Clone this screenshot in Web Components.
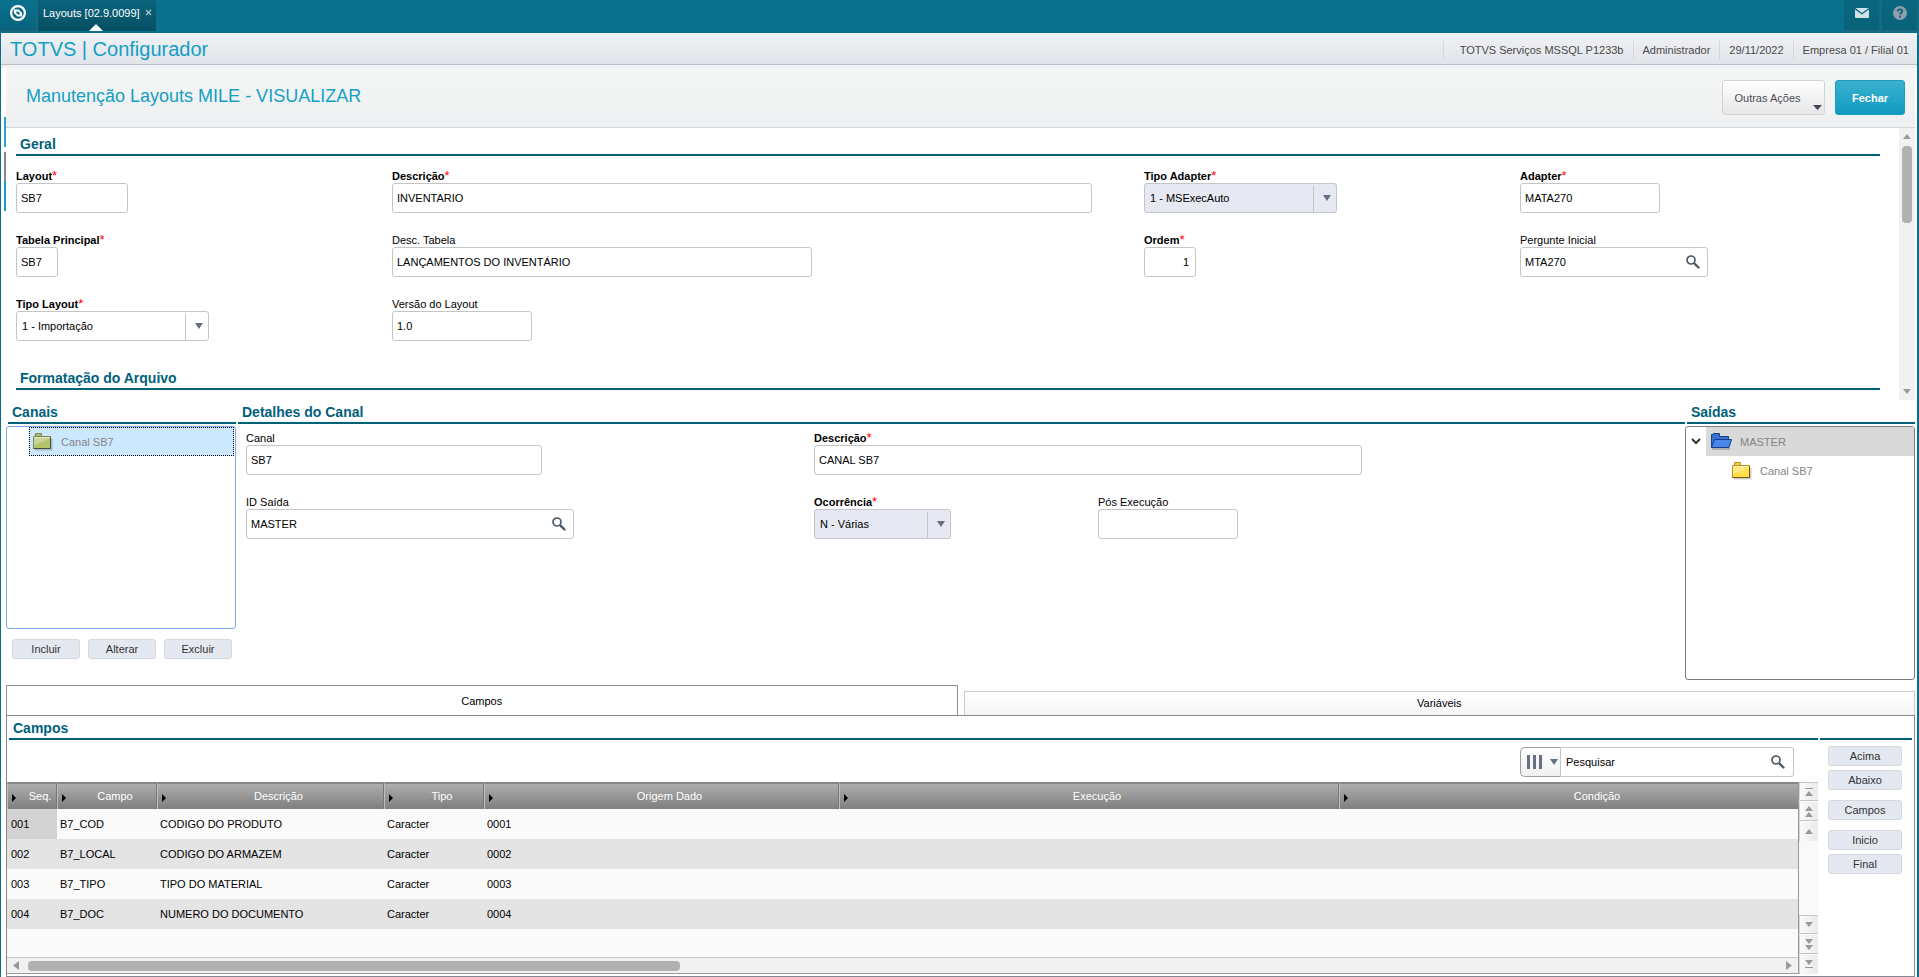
<!DOCTYPE html>
<html lang="pt-BR">
<head>
<meta charset="utf-8">
<meta name="viewport" content="width=device-width, initial-scale=1">
<title>TOTVS | Configurador</title>
<style>
  html, body { margin: 0; height: 100%; }
  body { font: 11px/14px "Liberation Sans", Arial, sans-serif; color: #000; background: #fff; }
  .grid { display: grid; grid-template-columns: repeat(5, minmax(0, 1fr)); row-gap: 20px; }
  .c1 { grid-column: 1; } .c2 { grid-column: 2; } .c3 { grid-column: 3; } .c4 { grid-column: 4; } .c5 { grid-column: 5; }
  .c12 { grid-column: 1 / span 2; } .c23 { grid-column: 2 / span 2; } .c34 { grid-column: 3 / span 2; }
</style>
</head>
<body>
<mile-app>
  <top-bar slot="top" tab="Layouts [02.9.0099]"></top-bar>
  <info-bar slot="info" heading="TOTVS | Configurador">
    <span>TOTVS Serviços MSSQL P1233b</span><span>Administrador</span><span>29/11/2022</span><span>Empresa 01 / Filial 01</span>
  </info-bar>
  <page-title slot="title">Manutenção Layouts MILE - VISUALIZAR</page-title>

  <scroll-form slot="form">
    <section-title>Geral</section-title>
    <div class="grid" slot="fields">
      <form-field class="c1" label="Layout" required value="SB7" style="--w:112px"></form-field>
      <form-field class="c23" label="Descrição" required value="INVENTARIO" style="--w:700px"></form-field>
      <form-field class="c4" label="Tipo Adapter" required kind="select" locked value="1 - MSExecAuto" style="--w:193px"></form-field>
      <form-field class="c5" label="Adapter" required value="MATA270" style="--w:140px"></form-field>
      <form-field class="c1" label="Tabela Principal" required value="SB7" style="--w:42px"></form-field>
      <form-field class="c23" label="Desc. Tabela" value="LANÇAMENTOS DO INVENTÁRIO" style="--w:420px"></form-field>
      <form-field class="c4" label="Ordem" required value="1" numeric style="--w:52px"></form-field>
      <form-field class="c5" label="Pergunte Inicial" kind="lookup" value="MTA270" style="--w:188px"></form-field>
      <form-field class="c1" label="Tipo Layout" required kind="select" value="1 - Importação" style="--w:193px"></form-field>
      <form-field class="c2" label="Versão do Layout" value="1.0" style="--w:140px"></form-field>
    </div>
    <section-title slot="next">Formatação do Arquivo</section-title>
  </scroll-form>

  <tree-panel slot="left" heading="Canais" active>
    <tree-item folder="green" selected>Canal SB7</tree-item>
    <ui-button slot="actions">Incluir</ui-button>
    <ui-button slot="actions">Alterar</ui-button>
    <ui-button slot="actions">Excluir</ui-button>
  </tree-panel>

  <detail-panel slot="center" heading="Detalhes do Canal">
    <div class="grid">
      <form-field class="c12" label="Canal" value="SB7" style="--w:296px"></form-field>
      <form-field class="c34" label="Descrição" required value="CANAL SB7" style="--w:548px"></form-field>
      <form-field class="c12" label="ID Saída" kind="lookup" value="MASTER" style="--w:328px"></form-field>
      <form-field class="c3" label="Ocorrência" required kind="select" locked value="N - Várias" style="--w:137px"></form-field>
      <form-field class="c4" label="Pós Execução" value="" style="--w:140px"></form-field>
    </div>
  </detail-panel>

  <tree-panel slot="right" heading="Saídas">
    <tree-item folder="blue" open>MASTER</tree-item>
    <tree-item folder="yellow" child>Canal SB7</tree-item>
  </tree-panel>

  <tab-set slot="tabs" first="Campos" second="Variáveis"></tab-set>
  <fields-pane slot="pane"></fields-pane>
</mile-app>

<script>
const BASE = `
  :host { display: block; box-sizing: border-box; }
  *, *::before, *::after { box-sizing: border-box; }
  button, input, select { font: inherit; color: inherit; margin: 0; }
`;
const define = (name, render) => customElements.define(name, class extends HTMLElement {
  constructor() { super(); this.attachShadow({ mode: 'open' }); }
  connectedCallback() {
    const { css, html } = render(this);
    this.shadowRoot.innerHTML = `<style>${BASE}${css}</style>${html}`;
  }
});
const tri = (dir, w = 8, h = 5, fill = '#9a9a9a') => {
  const d = { up: `M0 ${h}L${w / 2} 0L${w} ${h}z`, down: `M0 0H${w}L${w / 2} ${h}z`,
    left: `M${w} 0V${h}L0 ${h / 2}z`, right: `M0 0V${h}L${w} ${h / 2}z` }[dir];
  return `<svg width="${w}" height="${h}" viewBox="0 0 ${w} ${h}" aria-hidden="true"><path d="${d}" fill="${fill}"/></svg>`;
};
const lens = `<svg width="14" height="14" viewBox="0 0 14 14" aria-hidden="true" fill="none" stroke="#4f5a69"><circle cx="5" cy="5" r="4" stroke-width="1.7"/><path d="M8 8l1.600 1.600" stroke-width="1.800"/><path d="M9.300 9.300l3.200 3.200" stroke-width="2.400" stroke-linecap="round"/></svg>`;

define('mile-app', () => ({
  css: `
    :host { display: flex; flex-direction: column; min-height: 100vh; }
    .frame { flex: 1; display: flex; flex-direction: column; border-left: 1px solid #08708c; border-right: 2px solid #08708c; background: #fff; }
    .work { position: relative; flex: 1; display: flex; flex-direction: column; padding: 0 2px 0 5px; }
    .edge { position: absolute; left: 3px; top: 49px; width: 2px; height: 94px;
      background: linear-gradient(#2da3c4 0 30px, #fff 30px 35px, #8b8689 35px 64px, #18a0c4 64px); }
    .mid { display: grid; grid-template-columns: 230px minmax(0, 1fr) 230px; margin-top: 4px; min-height: 276px; }
    ::slotted([slot=pane]) { flex: 1; }
  `,
  html: `<slot name="top"></slot><div class="frame"><slot name="info"></slot>
    <main class="work"><div class="edge"></div><slot name="title"></slot><slot name="form"></slot>
    <div class="mid"><slot name="left"></slot><slot name="center"></slot><slot name="right"></slot></div>
    <slot name="tabs"></slot><slot name="pane"></slot></main></div>`
}));

define('top-bar', el => ({
  css: `
    :host { display: flex; height: 33px; background: #0a718d; align-items: flex-start; color: #fff; }
    button { height: 31px; width: 36px; border: 0; padding: 0 0 5px; background: linear-gradient(#0a718d, #08647d); display: flex; align-items: center; justify-content: center; }
    .home { border-right: 1px solid #2c5f6f; width: 37px; padding-right: 1px; border-bottom: 1px solid #2c5f6f; }
    .tab { position: relative; display: flex; align-items: center; gap: 5px; height: 31px; margin-left: 1px; padding: 0 4px 5px 5px; background: linear-gradient(#09657e, #064f62); }
    .tab a { color: #fff; text-decoration: none; }
    .tab button { width: 7px; height: 20px; padding: 0 0 2px; background: none; }
    .notch { position: absolute; left: 51px; bottom: 0; display: flex; }
    .right { margin-left: auto; display: flex; gap: 2px; padding-right: 1px; }
    .right button { border-bottom: 1px solid #2c5f6f; border-right: 1px solid #2c5f6f; background: linear-gradient(#09677f, #08627a); }
  `,
  html: `<button class="home" aria-label="Início"><svg width="16" height="16" viewBox="0 0 16 16"><circle cx="8" cy="8" r="6.900" fill="none" stroke="#fff" stroke-width="2.200"/><path d="M3.800 4.600H8.600L12.200 8V11.400H7.400L3.800 8z" fill="#fff"/><path d="M6.300 6.500H8.200L9.900 8.200V9.600H8L6.300 8z" fill="#0a6c87"/></svg></button>
    <div class="tab"><a href="#">${el.getAttribute('tab')}</a><button aria-label="Fechar aba"><svg width="7" height="7" viewBox="0 0 7 7"><path d="M1 1l5 5M6 1L1 6" stroke="#a9c6cf" stroke-width="1.200"/></svg></button><span class="notch">${tri('up', 14, 7, '#fff')}</span></div>
    <div class="right"><button aria-label="Mensagens"><svg width="14" height="10" viewBox="0 0 14 10"><rect width="14" height="10" rx="1" fill="#d3e0e5"/><path d="M0 .6L7 5.800L14 .6" fill="none" stroke="#0a6a83" stroke-width="1.300"/></svg></button>
    <button aria-label="Ajuda"><svg width="14" height="14" viewBox="0 0 14 14"><circle cx="7" cy="7" r="7" fill="#8c9dab"/><path d="M4.800 5.400C4.800 2.600 9.300 2.700 9.300 5.200C9.300 6.800 7 6.700 7 8.500M7 9.700v1.700" fill="none" stroke="#0a6179" stroke-width="1.700"/></svg></button></div>`
}));

define('info-bar', el => ({
  css: `
    :host { display: flex; align-items: center; height: 35px; padding: 0 8px 1px 9px; border-bottom: 3px solid #f0eff2;
      background: linear-gradient(#f0f1f3, #e0e4e9); box-shadow: inset 0 -1px #b8c3ca; }
    h1 { margin: 0; font-size: 20px; line-height: 24px; font-weight: 400; color: #149fc4; }
    nav { margin-left: auto; display: flex; color: #4a4a4a; padding-top: 2px; }
    ::slotted(span) { border-left: 1px solid #d3d6d9; line-height: 18px; padding: 0 9px; }
    ::slotted(span:first-child) { padding-left: 16px; }
    ::slotted(span:last-child) { padding-right: 0; }
  `,
  html: `<h1>${el.getAttribute('heading')}</h1><nav><slot></slot></nav>`
}));

define('page-title', () => ({
  css: `
    :host { display: flex; align-items: center; gap: 10px; height: 60px; padding: 0 10px 0 20px; background: linear-gradient(#f5f7f6, #eeeff1); border-bottom: 1px solid #d4d6d9; }
    h2 { margin: 0 auto 4px 0; font-size: 18px; line-height: 22px; font-weight: 400; color: #149fc4; }
    button { height: 35px; border-radius: 3px; }
    .more { position: relative; width: 103px; padding: 0 16px 0 4px; border: 1px solid #d2d3d5; background: linear-gradient(#fff, #e6e6e7); color: #4a4d55; text-align: center; }
    .more span { position: absolute; right: 2px; bottom: 4px; display: flex; }
    .close { width: 70px; border: 1px solid #1d9cbd; background: linear-gradient(#3bb0d0, #0f9bc0); color: #fff; font-weight: 700; }
  `,
  html: `<h2><slot></slot></h2><button class="more">Outras Ações<span>${tri('down', 9, 5, '#44495a')}</span></button><button class="close">Fechar</button>`
}));

define('section-title', () => ({
  css: `h3 { margin: 0; padding: 0 4px 2px; font-size: 14px; line-height: 16px; font-weight: 700; color: #00617b; border-bottom: 2px solid #00617b; min-height: 20px; }`,
  html: `<h3><slot></slot></h3>`
}));

define('scroll-form', () => ({
  css: `
    :host { display: flex; }
    .body { flex: 1; padding: 8px 3px 10px 10px; }
    .head { margin-right: 16px; }
    .fields { margin: 13px 0 29px; }
    .bar { width: 16px; background: #f1f1f1; display: flex; flex-direction: column; align-items: center; padding: 6px 0; }
    .thumb { width: 10px; height: 77px; margin: 7px 0 auto; border-radius: 4px; background: #b1b1b1; }
    .bar svg { display: block; }
  `,
  html: `<div class="body"><div class="head"><slot></slot></div><div class="fields"><slot name="fields"></slot></div><div class="head"><slot name="next"></slot></div></div>
    <div class="bar">${tri('up', 8, 5)}<div class="thumb"></div>${tri('down', 8, 5)}</div>`
}));

define('form-field', el => {
  const kind = el.getAttribute('kind');
  const value = el.getAttribute('value');
  const req = el.hasAttribute('required');
  const control = kind === 'select'
    ? `<select id="f"><option>${value}</option></select><span class="drop">${tri('down', 8, 6, '#657081')}</span>`
    : `<input id="f" type="text" value="${value}">` + (kind === 'lookup' ? `<button aria-label="Pesquisar ${el.getAttribute('label')}">${lens}</button>` : '');
  return {
    css: `
      label { display: block; height: 14px; line-height: 14px; font-weight: ${req ? 700 : 400}; white-space: nowrap; }
      label i { font-style: normal; font-weight: 400; font-size: 13px; line-height: 0; color: #f00; }
      .box { position: relative; display: flex; width: var(--w, 100%); max-width: 100%; height: 30px; border: 1px solid #c3c6c8; border-radius: 3px; background: ${el.hasAttribute('locked') ? '#e6e9f1' : '#fff'}; }
      input, select { flex: 1; min-width: 0; width: 100%; border: 0; background: none; outline: 0; height: 28px; padding: 0 4px; appearance: none; text-align: ${el.hasAttribute('numeric') ? 'right' : 'left'}; }
      input { padding-right: ${el.hasAttribute('numeric') ? 6 : 4}px; }
      select { padding-left: 5px; }
      .drop { width: 23px; margin-top: 2px; border-left: 1px solid #c3c6c8; display: flex; align-items: center; justify-content: center; padding: 0 0 3px 3px; flex: none; pointer-events: none; }
      button { border: 0; background: none; padding: 0 7px 1px 0; display: flex; align-items: center; }
    `,
    html: `<label for="f">${el.getAttribute('label')}${req ? '<i>*</i>' : ''}</label><div class="box">${control}</div>`
  };
});

define('ui-button', () => ({
  css: `button { display: block; width: 100%; height: 20px; padding: 0; border: 1px solid #d5d8dd; border-radius: 3px; background: #e4e8f1; color: #333; line-height: 16px; }`,
  html: `<button><slot></slot></button>`
}));

define('tree-panel', el => ({
  css: `
    :host { display: flex; flex-direction: column; }
    section-title { margin-left: 2px; }
    .tree { flex: 1; margin-top: 2px; border: 1px solid ${el.hasAttribute('active') ? '#7aa7f2' : '#7d7d7d'}; border-radius: 3px; }
    .actions { display: flex; gap: 8px; padding: 0 4px 0 6px; }
    :host([active]) .actions { padding-top: 10px; padding-bottom: 21px; }
    ::slotted(ui-button) { flex: 1; }
  `,
  html: `<section-title>${el.getAttribute('heading')}</section-title><div class="tree" role="tree"><slot></slot></div><div class="actions"><slot name="actions"></slot></div>`
}));

const FOLDER = {
  green: ['#a5b878', '#b5c36b', '#7c8a55', '#4b4f38'],
  yellow: ['#f7cf45', '#ffe04a', '#c38d25', '#7a5208'],
  blue: ['#3a72d6', '#4a86ea', '#143f8e', '#143f8e']
};
define('tree-item', el => {
  const [back, front, edge, dark] = FOLDER[el.getAttribute('folder')];
  const open = el.hasAttribute('open');
  const selected = el.hasAttribute('selected');
  const icon = open
    ? `<svg width="23" height="18" viewBox="0 0 23 18"><path d="M2 16H20" stroke="#0003" stroke-width="2"/><path d="M1.500 14.500V1.500H3.500V.5H9.500V3.500H18.500V7.500" fill="${back}" stroke="${edge}"/><path d="M4.500 6.500H21.500L19 14.500H1.500z" fill="${front}" stroke="${edge}"/></svg>`
    : `<svg width="21" height="18" viewBox="0 0 21 18"><path d="M3 16.500H19.500V6" fill="none" stroke="#0003" stroke-width="2"/><path d="M3.500 3.500V.5H9.500V3.500" fill="${back}" stroke="${edge}"/><path d="M1.500 3.500H18.500V15.500H1.500z" fill="${front}" stroke="${edge}"/><path d="M2 4.500H18" fill="none" stroke="#fff9"/><path d="M2 15V12L12 8.500L18 5H2z" fill="#fff" opacity=".3"/><path d="M1.500 15.500H18.500V4" fill="none" stroke="${dark}"/></svg>`;
  return {
    css: `
      :host { display: flex; height: 29px; color: #858585; }
      .twist { width: ${el.hasAttribute('child') ? 41 : open ? 20 : 22}px; flex: none; display: flex; align-items: center; justify-content: center; }
      .row { flex: 1; display: flex; align-items: center; gap: ${open ? 7 : 8}px; padding-left: 4px; background: ${open ? '#d9d9d9' : selected ? '#cce8ff' : 'none'}; ${selected ? 'border: 1px dotted #000; padding-left: 2px; margin-right: 1px;' : ''} }
      .row svg { flex: none; }
    `,
    html: `<span class="twist">${open ? '<svg width="10" height="7" viewBox="0 0 10 7"><path d="M1 1l4 4l4-4" fill="none" stroke="#333" stroke-width="2"/></svg>' : ''}</span><span class="row" role="treeitem">${icon}<span><slot></slot></span></span>`
  };
});

define('detail-panel', el => ({
  css: `:host { padding-left: 2px; min-width: 0; } .body { padding: 7px 19px 0 8px; }`,
  html: `<section-title>${el.getAttribute('heading')}</section-title><div class="body"><slot></slot></div>`
}));

define('tab-set', el => ({
  css: `
    :host { display: flex; align-items: flex-end; gap: 6px; margin-top: 5px; height: 30px; }
    button { flex: 1; border: 1px solid #8f9095; border-bottom: 0; padding: 0; background: #fff; height: 30px; border-radius: 0; }
    button + button { height: 24px; padding-bottom: 2px; border-color: #c9cacc; background: linear-gradient(#fff, #f4f4f5); }
  `,
  html: `<button role="tab" aria-selected="true">${el.getAttribute('first')}</button><button role="tab">${el.getAttribute('second')}</button>`
}));

define('fields-pane', () => ({
  css: `
    :host { display: grid; grid-template-columns: minmax(0, 1fr) 92px; column-gap: 2px; padding: 4px 2px 2px 0; border: 1px solid #858890; }
    .main { display: flex; flex-direction: column; }
    .main section-title { margin-left: 2px; }
    .tools { display: flex; justify-content: flex-end; padding: 7px 24px 5px 0; }
    .side { display: flex; flex-direction: column; }
    .group { display: grid; gap: 4px; padding: 0 10px 10px 8px; }
    .group:first-of-type { padding-top: 6px; }
    data-grid { flex: 1; }
  `,
  html: `<div class="main"><section-title>Campos</section-title><div class="tools"><search-box></search-box></div><data-grid></data-grid></div>
    <div class="side"><section-title></section-title>
      <div class="group"><ui-button>Acima</ui-button><ui-button>Abaixo</ui-button></div>
      <div class="group"><ui-button>Campos</ui-button></div>
      <div class="group"><ui-button>Inicio</ui-button><ui-button>Final</ui-button></div></div>`
}));

define('search-box', () => ({
  css: `
    :host { display: flex; width: 274px; height: 30px; }
    .cols { width: 41px; border: 1px solid #9a9da1; border-right-color: #c3c6c8; border-radius: 5px 0 0 5px; background: linear-gradient(#fff, #f0f0f0); padding: 0 2px 1px 6px; display: flex; align-items: center; justify-content: space-between; }
    .box { flex: 1; display: flex; border: 1px solid #c3c6c8; border-left: 0; border-radius: 0 3px 3px 0; }
    input { flex: 1; min-width: 0; border: 0; background: none; padding: 0 5px; outline: 0; }
    input::placeholder { color: #000; opacity: 1; }
    .go { border: 0; background: none; padding: 0 8px 1px 0; display: flex; align-items: center; }
  `,
  html: `<button class="cols" aria-label="Colunas"><svg width="16" height="14" viewBox="0 0 16 14"><path d="M1.500 0v14M7.500 0v14M13.500 0v14" stroke="#687084" stroke-width="3"/></svg>${tri('down', 8, 6, '#657081')}</button>
    <div class="box"><input type="text" placeholder="Pesquisar" aria-label="Pesquisar"><button class="go" aria-label="Buscar">${lens}</button></div>`
}));

const COLS = [['Seq.', 50], ['Campo', 100], ['Descrição', 227], ['Tipo', 100], ['Origem Dado', 355], ['Execução', 500], ['Condição', 0]];
const ROWS = [
  ['001', 'B7_COD', 'CODIGO DO PRODUTO', 'Caracter', '0001', '', ''],
  ['002', 'B7_LOCAL', 'CODIGO DO ARMAZEM', 'Caracter', '0002', '', ''],
  ['003', 'B7_TIPO', 'TIPO DO MATERIAL', 'Caracter', '0003', '', ''],
  ['004', 'B7_DOC', 'NUMERO DO DOCUMENTO', 'Caracter', '0004', '', '']
];
define('data-grid', () => ({
  css: `
    :host { display: flex; }
    .view { flex: 1; min-width: 0; display: flex; flex-direction: column; background: #fafafa; border-right: 1px solid #999; border-bottom: 1px solid #999; }
    .rows { overflow: hidden; }
    table { width: 100%; min-width: 1832px; table-layout: fixed; border-collapse: separate; border-spacing: 0; }
    th { position: relative; height: 27px; padding: 0 0 1px 16px; font-weight: 400; color: #fff; text-align: center; background: linear-gradient(#adadad, #7f7f7f); border-top: 2px solid #868686; border-right: 1px solid #777; border-left: 1px solid #bdbdbd; white-space: nowrap; }
    th svg { position: absolute; left: 4px; top: 10px; }
    td { height: 30px; padding: 0 3px; white-space: nowrap; }
    td:first-child { padding-left: 4px; }
    tr:nth-child(even) td { background: #e4e4e4; }
    tr:first-child td:first-child { background: #d3d3d3; }
    .hbar { margin-top: auto; height: 16px; border-top: 1px solid #c8c8c8; background: #f1f1f1; display: flex; align-items: center; padding: 0 6px; gap: 9px; }
    .hbar i { display: block; flex: 1; }
    .hbar i::before { content: ""; display: block; width: 652px; max-width: 100%; height: 10px; border-radius: 4px; background: #b1b1b1; }
    .vbar { width: 19px; display: flex; flex-direction: column; background: #f9f9fb; gap: 1px; }
    .vbar button { height: 19px; padding: 0; border: 0; border-bottom: 1px solid #c5c5c8; border-left: 1px solid #d5d5d8; background: linear-gradient(90deg, #fafafa, #e9e9eb); display: flex; flex-direction: column; gap: 1px; align-items: center; justify-content: center; color: #9a9a9a; }
    .vbar button:first-child { border-top: 1px solid #c5c5c8; }
    .vbar button:nth-child(3), .vbar button:last-child { border-bottom: 0; }
    .vbar button:nth-child(4) { margin-top: auto; border-top: 1px solid #c5c5c8; }
    .vbar hr { width: 8px; height: 1px; border: 0; margin: 1px 0; background: #9a9a9a; }
  `,
  html: `<div class="view"><div class="rows"><table><colgroup>${COLS.map(([, w]) => `<col${w ? ` style="width:${w}px"` : ''}>`).join('')}</colgroup>
      <thead><tr>${COLS.map(([t]) => `<th scope="col">${tri('right', 4, 8, '#000')}${t}</th>`).join('')}</tr></thead>
      <tbody>${ROWS.map(r => `<tr>${r.map(c => `<td>${c}</td>`).join('')}</tr>`).join('')}</tbody></table></div>
      <div class="hbar">${tri('left', 6, 9)}<i></i>${tri('right', 6, 9)}</div></div>
    <div class="vbar"><button aria-label="Primeiro"><hr>${tri('up')}</button><button aria-label="Página acima">${tri('up')}${tri('up')}</button><button aria-label="Acima">${tri('up')}</button>
      <button aria-label="Abaixo">${tri('down')}</button><button aria-label="Página abaixo">${tri('down')}${tri('down')}</button><button aria-label="Último">${tri('down')}<hr></button></div>`
}));
</script>
</body>
</html>
